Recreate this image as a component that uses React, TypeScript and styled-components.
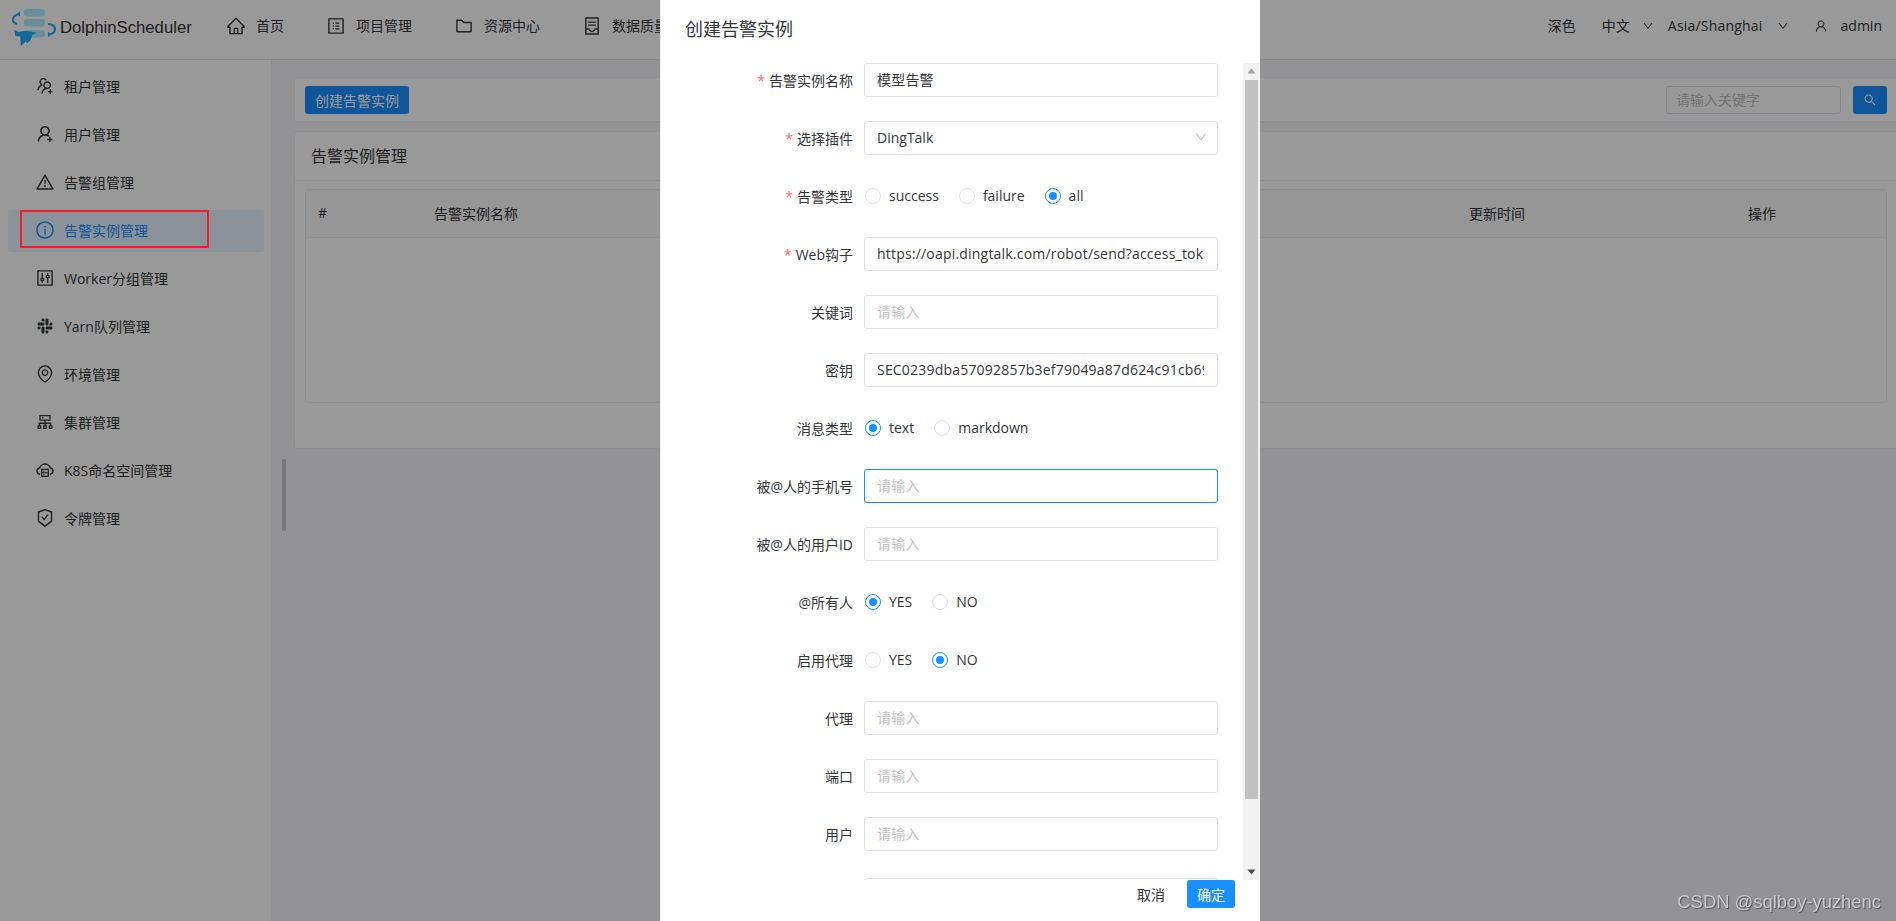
import React from "react";
import styled, { createGlobalStyle } from "styled-components";
import {
  AiOutlineHome, AiOutlineProfile, AiOutlineFolder, AiOutlineContainer, AiOutlineDown, AiOutlineUser,
  AiOutlineSearch, AiOutlineUsergroupAdd, AiOutlineUserAdd, AiOutlineWarning, AiOutlineInfoCircle,
  AiOutlineControl, AiOutlineSlack, AiOutlineEnvironment, AiOutlineCluster, AiOutlineCloudServer,
  AiOutlineSafetyCertificate,
} from "react-icons/ai";

const FONT = `"Open Sans", "Noto Sans CJK SC", sans-serif`;
const BLUE = "#1890ff";

const Global = createGlobalStyle`
  * { box-sizing: border-box; }
  html, body { margin: 0; height: 100%; overflow: hidden; }
  body { font-family: ${FONT}; font-size: 14px; color: #333639; background: #fff; }
`;

const Page = styled.div`display: flex; flex-direction: column; width: 1896px; height: 921px; overflow: hidden;`;

const Header = styled.header`
  flex: 0 0 60px; display: flex; align-items: center; padding: 0 14px 0 0;
  background: #fff; border-bottom: 1px solid #e6e6ea;
`;
const Brand = styled.div`display: flex; align-items: center; width: 192px; height: 48px; margin-top: 1px;`;
const BrandName = styled.span`font: 16.7px "Liberation Sans", sans-serif; color: #333; margin-bottom: 4px;`;
const Nav = styled.nav`display: flex; margin: 0 0 8px 34px; gap: 42px;`;
const NavItem = styled.div`display: flex; align-items: center; gap: 10px; line-height: 20px; color: #333639; white-space: nowrap; svg { font-size: 20px; }`;
const HeaderRight = styled.div`margin: 0 0 8px auto; display: flex; align-items: center; color: #333639;`;
const HeaderText = styled.span<{ $after?: number; $spacing?: number }>`
  margin-right: ${(p) => p.$after ?? 0}px; letter-spacing: ${(p) => p.$spacing ?? 0}px; line-height: 20px;
`;
const Chevron = styled(AiOutlineDown)<{ $after: number }>`font-size: 12px; margin-right: ${(p) => p.$after}px;`;
const UserIcon = styled(AiOutlineUser)`font-size: 14px; margin-right: 13px;`;

const Body = styled.div`flex: 1; display: flex; min-height: 0;`;
const Sidebar = styled.aside`
  position: relative; flex: 0 0 272px; display: flex; flex-direction: column; gap: 6px;
  padding: 6px 7px 0 8px; background: #fff; border-right: 1px solid #eeeef0;
`;
const SideItem = styled.div<{ $active?: boolean }>`
  position: relative; height: 42px; display: flex; align-items: center; gap: 9px; padding: 0 0 2px 27px;
  border-radius: 3px; white-space: nowrap;
  background: ${(p) => (p.$active ? "#e8f4ff" : "transparent")};
  color: ${(p) => (p.$active ? BLUE : "#333639")};
  svg { font-size: 20px; flex: none; }
`;
const Annotation = styled.div`
  position: absolute; left: 12px; top: 0; width: 189px; height: 38px;
  border: 2px solid #ee1c25; z-index: 20;
`;
const SideThumb = styled.div`
  position: absolute; left: 282px; top: 399px; width: 4px; height: 72px;
  background: #c6c6c6; border-radius: 2px; z-index: 1;
`;

const Main = styled.main`flex: 1; display: flex; flex-direction: column; gap: 9px; padding: 17px 0 0 22px; background: #f6f6fa; min-width: 0;`;
const Card = styled.section`background: #fff; border: 1px solid #eeeef1; border-right: 0; border-radius: 3px 0 0 3px;`;
const Toolbar = styled(Card)`height: 45px; display: flex; align-items: center; justify-content: space-between; padding: 0 9px 0 10px;`;
const PrimaryButton = styled.button`
  height: 28px; padding: 0 10px; border: 0; border-radius: 3px; background: ${BLUE}; color: #fff;
  font: 14px ${FONT}; display: flex; align-items: center; justify-content: center;
`;
const SearchBox = styled.div`display: flex; gap: 12px;`;
const SearchInput = styled.input`
  width: 175px; height: 28px; padding: 0 9px; border: 1px solid #e0e0e6; border-radius: 3px; font: 14px ${FONT}; outline: 0;
  &::placeholder { color: #c2c2c2; opacity: 1; }
`;
const SearchButton = styled(PrimaryButton)`width: 34px; padding: 0; svg { font-size: 14px; }`;
const ListCard = styled(Card)`height: 318px;`;
const CardTitle = styled.div`height: 49px; display: flex; align-items: center; padding: 0 0 3px 16px; font-size: 16px; color: #333639; border-bottom: 1px solid #eeeef1;`;
const Table = styled.div`margin: 8px 9px 0 10px; height: 214px; border: 1px solid #eeeef1; border-radius: 3px;`;
const TableHead = styled.div`
  height: 48px; padding-bottom: 2px; display: grid; grid-template-columns: 116px repeat(3, 1fr) 279px 150px; align-items: center;
  background: #fafafc; border-bottom: 1px solid #eeeef1;
`;
const HeadCell = styled.div`padding-left: 12px; color: #333; white-space: nowrap;`;

const Mask = styled.div`position: fixed; inset: 0; z-index: 10; background: rgba(0, 0, 0, 0.4); padding-left: 660px;`;
const Modal = styled.div`width: 600px; height: 921px; display: flex; flex-direction: column; background: #fff; border-left: 1px solid #f0f0f6;`;
const ModalHead = styled.div`flex: 0 0 63px; padding: 15px 0 0 24px; font-size: 18px; line-height: 28px; color: #333639;`;
const ModalBody = styled.div`height: 817px; display: flex;`;
const FormArea = styled.div`flex: 1; overflow: hidden; padding-left: 23px; display: flex; flex-direction: column; gap: 24px;`;
const Row = styled.div<{ $shift?: number }>`
  flex: none; display: grid; grid-template-columns: 169px 354px; column-gap: 11px; align-items: center; height: 34px;
  margin-top: ${(p) => p.$shift ?? 0}px;
`;
const Label = styled.label`text-align: right; color: #333639; white-space: nowrap;`;
const Star = styled.span`color: #f56c6c; margin-right: 4px;`;
const Field = styled.input<{ $focus?: boolean }>`
  width: 354px; height: 34px; padding: 0 13px 2px 12px; border-radius: 3px; outline: 0; font: 14px ${FONT}; color: #333639; letter-spacing: 0.2px;
  border: 1px solid ${(p) => (p.$focus ? BLUE : "#e0e0e6")};
  &::placeholder { color: #c2c2c2; opacity: 1; }
`;
const SelectBox = styled.div`
  width: 354px; height: 34px; padding: 0 9px 2px 12px; display: flex; align-items: center; justify-content: space-between;
  border: 1px solid #e0e0e6; border-radius: 3px; color: #333639;
`;
const SelectArrow = styled(AiOutlineDown)`font-size: 14px; color: #c2c2c2;`;
const RadioGroup = styled.div`display: flex; gap: 20px; padding-left: 1px;`;
const RadioItem = styled.div`display: flex; align-items: center; gap: 8px; line-height: 20px; color: #333639;`;
const RadioDot = styled.span<{ $on?: boolean }>`
  width: 16px; height: 16px; border-radius: 50%; background: #fff; display: flex; align-items: center; justify-content: center;
  border: 1px solid ${(p) => (p.$on ? BLUE : "#e0e0e6")};
  &::after { content: ""; width: 8px; height: 8px; border-radius: 50%; background: ${(p) => (p.$on ? BLUE : "transparent")}; }
`;

const ScrollBar = styled.div`flex: 0 0 17px; display: flex; flex-direction: column; background: #f1f1f1;`;
const ScrollArrow = styled.svg`flex: 0 0 17px; width: 17px; height: 17px;`;
const ScrollThumb = styled.div`flex: 0 0 719px; margin: 0 2px; background: #c1c1c1;`;
const ScrollGap = styled.div`flex: 1;`;

const ModalFoot = styled.div`flex: 1; display: flex; align-items: flex-start; justify-content: flex-end; gap: 22px; padding-right: 25px;`;
const TextButton = styled.button`height: 28px; padding: 0; border: 0; background: none; font: 14px ${FONT}; color: #333639;`;
const ConfirmButton = styled(PrimaryButton)`width: 48px;`;

const Watermark = styled.div`
  position: fixed; right: 15px; bottom: 8px; z-index: 30; font: 18.4px "Liberation Sans", sans-serif; color: #c8c8c8;
  text-shadow: 1px 1px 1px #555;
`;

const Logo = () => (
  <svg width="60" height="48" viewBox="0 0 60 48" style={{ flex: "none" }}>
    <rect x="23.5" y="3" width="21.5" height="7.5" rx="3.7" fill="#aeeeff" />
    <rect x="23.5" y="13" width="21.5" height="7.5" rx="3.7" fill="#aeeeff" />
    <rect x="23.5" y="24" width="21.5" height="7.5" rx="3.7" fill="#aeeeff" />
    <path d="M19.5 8 Q13 9.5 13 13.5 Q13 17 17 18" fill="none" stroke="#22aef8" strokeWidth="2.2" />
    <path d="M20 5.5 L20 10.5 L16.5 8 Z" fill="#22aef8" />
    <path d="M48 18 Q55 18.5 55 23 Q55 27.5 49 28.5" fill="none" stroke="#22aef8" strokeWidth="2.2" />
    <path d="M48 26 L48 31 L51.5 28.5 Z" fill="#22aef8" />
    <path d="M14 24 L19 26 L23 25 Q30 24.5 37 27 L32 29 Q32 34 27 37 L25.5 35.5 L21 40 Q20 34 20.5 30.5 L15.5 30 Z" fill="#22aef8" />
  </svg>
);

const navItems = [
  { icon: <AiOutlineHome />, text: "首页" },
  { icon: <AiOutlineProfile />, text: "项目管理" },
  { icon: <AiOutlineFolder />, text: "资源中心" },
  { icon: <AiOutlineContainer />, text: "数据质量" },
];
const sideItems = [
  { icon: <AiOutlineUsergroupAdd />, text: "租户管理" },
  { icon: <AiOutlineUserAdd />, text: "用户管理" },
  { icon: <AiOutlineWarning />, text: "告警组管理" },
  { icon: <AiOutlineInfoCircle />, text: "告警实例管理", active: true },
  { icon: <AiOutlineControl />, text: "Worker分组管理" },
  { icon: <AiOutlineSlack />, text: "Yarn队列管理" },
  { icon: <AiOutlineEnvironment />, text: "环境管理" },
  { icon: <AiOutlineCluster />, text: "集群管理" },
  { icon: <AiOutlineCloudServer />, text: "K8S命名空间管理" },
  { icon: <AiOutlineSafetyCertificate />, text: "令牌管理" },
];
const columns = ["#", "告警实例名称", "", "", "更新时间", "操作"];

type Radio = { text: string; on?: boolean };
type FormRow = { label: string; required?: boolean; value?: string; focus?: boolean; select?: string; radios?: Radio[]; shift?: number; blank?: boolean };
const formRows: FormRow[] = [
  { label: "告警实例名称", required: true, value: "模型告警" },
  { label: "选择插件", required: true, select: "DingTalk" },
  { label: "告警类型", required: true, radios: [{ text: "success" }, { text: "failure" }, { text: "all", on: true }] },
  { label: "Web钩子", required: true, value: "https://oapi.dingtalk.com/robot/send?access_token=2f4c9e7a1b" },
  { label: "关键词" },
  { label: "密钥", value: "SEC0239dba57092857b3ef79049a87d624c91cb69e3f1a" },
  { label: "消息类型", radios: [{ text: "text", on: true }, { text: "markdown" }] },
  { label: "被@人的手机号", focus: true },
  { label: "被@人的用户ID" },
  { label: "@所有人", radios: [{ text: "YES", on: true }, { text: "NO" }] },
  { label: "启用代理", radios: [{ text: "YES" }, { text: "NO", on: true }] },
  { label: "代理" },
  { label: "端口" },
  { label: "用户" },
  { label: "", shift: 3, blank: true },
];

function Control({ row }: { row: FormRow }) {
  if (row.select) {
    return (
      <SelectBox>
        {row.select}
        <SelectArrow />
      </SelectBox>
    );
  }
  if (row.radios) {
    return (
      <RadioGroup>
        {row.radios.map((r) => (
          <RadioItem key={r.text}>
            <RadioDot $on={r.on} />
            {r.text}
          </RadioItem>
        ))}
      </RadioGroup>
    );
  }
  return <Field readOnly value={row.value ?? ""} placeholder={row.blank ? "" : "请输入"} $focus={row.focus} />;
}

export default function App() {
  return (
    <>
      <Global />
      <Page>
        <Header>
          <Brand>
            <Logo />
            <BrandName>DolphinScheduler</BrandName>
          </Brand>
          <Nav>
            {navItems.map((n) => (
              <NavItem key={n.text}>
                {n.icon}
                {n.text}
              </NavItem>
            ))}
          </Nav>
          <HeaderRight>
            <HeaderText $after={26}>深色</HeaderText>
            <HeaderText $after={12}>中文</HeaderText>
            <Chevron $after={14} />
            <HeaderText $after={14} $spacing={0.2}>Asia/Shanghai</HeaderText>
            <Chevron $after={25} />
            <UserIcon />
            <HeaderText>admin</HeaderText>
          </HeaderRight>
        </Header>
        <Body>
          <Sidebar>
            {sideItems.map((s) => (
              <SideItem key={s.text} $active={s.active}>
                {s.icon}
                {s.text}
                {s.active && <Annotation />}
              </SideItem>
            ))}
            <SideThumb />
          </Sidebar>
          <Main>
            <Toolbar>
              <PrimaryButton>创建告警实例</PrimaryButton>
              <SearchBox>
                <SearchInput placeholder="请输入关键字" readOnly />
                <SearchButton aria-label="search">
                  <AiOutlineSearch />
                </SearchButton>
              </SearchBox>
            </Toolbar>
            <ListCard>
              <CardTitle>告警实例管理</CardTitle>
              <Table>
                <TableHead>
                  {columns.map((c, i) => (
                    <HeadCell key={i}>{c}</HeadCell>
                  ))}
                </TableHead>
              </Table>
            </ListCard>
          </Main>
        </Body>
      </Page>
      <Mask>
        <Modal>
          <ModalHead>创建告警实例</ModalHead>
          <ModalBody>
            <FormArea>
              {formRows.map((row, i) => (
                <Row key={i} $shift={row.shift}>
                  <Label>
                    {row.required && <Star>*</Star>}
                    {row.label}
                  </Label>
                  <Control row={row} />
                </Row>
              ))}
            </FormArea>
            <ScrollBar>
              <ScrollArrow viewBox="0 0 17 17">
                <path d="M8.5 5.5 L12.5 10.5 L4.5 10.5 Z" fill="#a3a3a3" />
              </ScrollArrow>
              <ScrollThumb />
              <ScrollGap />
              <ScrollArrow viewBox="0 0 17 17">
                <path d="M4.5 6.5 L12.5 6.5 L8.5 11.5 Z" fill="#505050" />
              </ScrollArrow>
            </ScrollBar>
          </ModalBody>
          <ModalFoot>
            <TextButton>取消</TextButton>
            <ConfirmButton>确定</ConfirmButton>
          </ModalFoot>
        </Modal>
      </Mask>
      <Watermark>CSDN @sqlboy-yuzhenc</Watermark>
    </>
  );
}
